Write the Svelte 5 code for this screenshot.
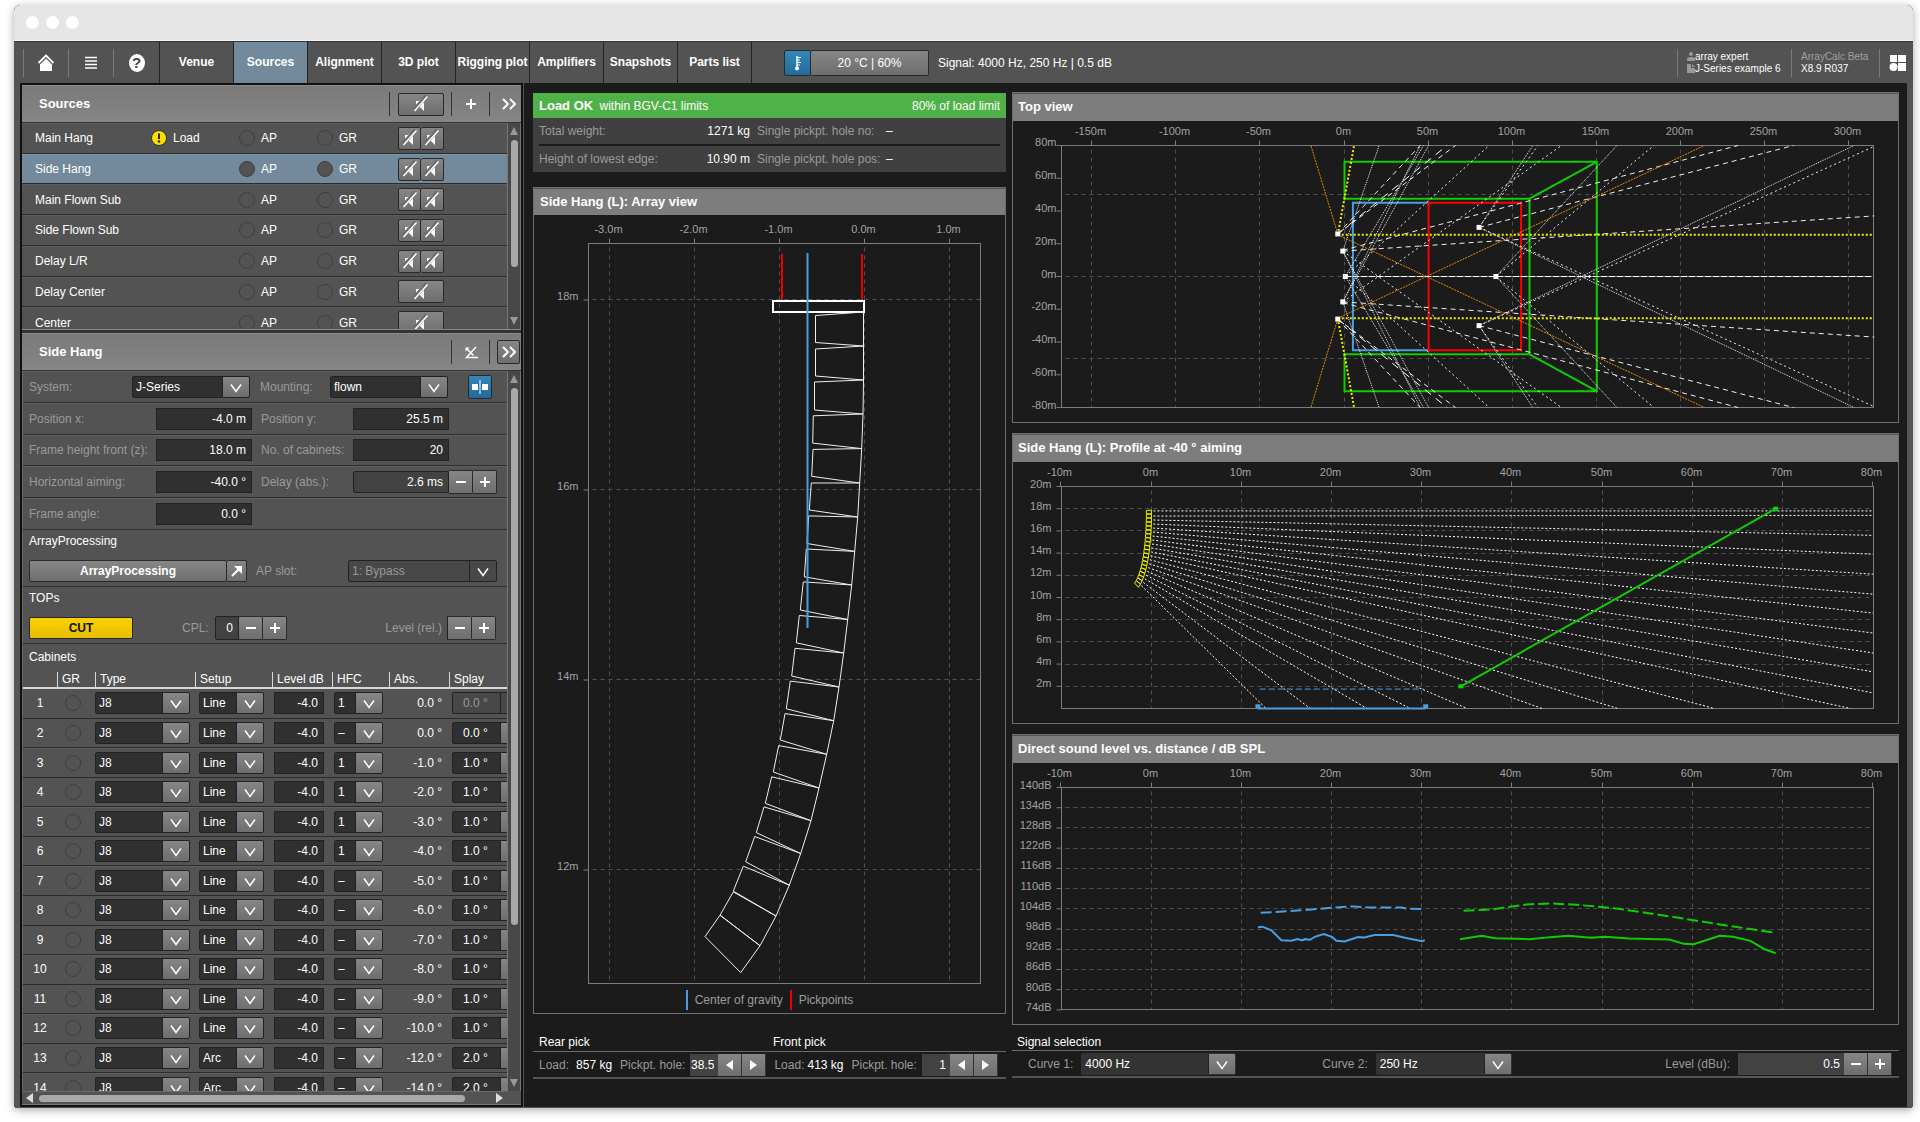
<script lang="ts">
  type Pt = [number, number];

  interface Axes {
    left: number;
    right: number;
    top: number;
    bottom: number;
    gap: number;
    labelY: number;
    drop: number;
    xs: { at: number; label: string }[];
    ys: { at: number; label: string }[];
    rows: number[];
  }

  const tabs = ["Venue", "Sources", "Alignment", "3D plot", "Rigging plot", "Amplifiers", "Snapshots", "Parts list"];

  const sources = [
    { name: "Main Hang", warn: true, pair: true },
    { name: "Side Hang", pair: true },
    { name: "Main Flown Sub", pair: true },
    { name: "Side Flown Sub", pair: true },
    { name: "Delay L/R", pair: true },
    { name: "Delay Center", pair: false },
    { name: "Center", pair: false },
  ];
  let selected = $state("Side Hang");

  const splays = [0, 0, 1, 1, 1, 1, 1, 1, 1, 1, 1, 1, 2, 2];
  const hfcOn = [1, 3, 4, 5, 6];
  let sum = 0;
  const cabinets = splays.map((splay, i) => {
    sum += splay;
    return {
      no: i + 1,
      setup: i < 12 ? "Line" : "Arc",
      hfc: hfcOn.includes(i + 1) ? "1" : "–",
      abs: (sum ? "-" : "") + sum.toFixed(1) + " °",
      splay: splay.toFixed(1) + " °",
    };
  });

  function range(from: number, to: number, step: number) {
    const out: number[] = [];
    for (let v = from; step > 0 ? v <= to : v >= to; v += step) out.push(v);
    return out;
  }

  // array view: top left, bottom left, bottom right corner of every cabinet
  const hang = [
    [281.5, 100.5, 281.5, 127.5, 329.5, 131],
    [281.5, 134, 281.5, 161, 329.5, 165],
    [280.5, 167, 280.5, 195, 329, 199],
    [279.3, 200.8, 278.7, 228.1, 327.7, 233.6],
    [279, 234.4, 277.7, 261.3, 325.7, 268],
    [277.3, 268, 275.3, 295, 323.7, 302],
    [274.7, 300.9, 273, 328.5, 320.7, 336.4],
    [272.3, 334, 270.3, 361.8, 317.7, 370],
    [269.3, 366.9, 266.3, 395, 313.7, 404.5],
    [265.3, 400.5, 262.3, 427.8, 309.7, 438],
    [261, 433.3, 257.7, 461, 305, 472],
    [256.3, 466.1, 252.3, 493.8, 299.7, 505.7],
    [251, 498.6, 246.3, 525, 292.7, 539.3],
    [244.7, 530.6, 239.3, 557, 285, 573],
    [237.7, 561.8, 231.3, 588.3, 277, 605.7],
    [230, 591.9, 222.3, 617.6, 266.7, 638.5],
    [220.7, 621.5, 211.7, 646.8, 255.3, 670.2],
    [209.3, 651.2, 199.3, 676.1, 242, 701],
    [199.3, 676.9, 186, 700.2, 226, 730.7],
    [186, 700.2, 171, 721.6, 206.7, 757.6],
  ];
  const boxes: Pt[][] = hang.map((c, i) => {
    const front: Pt = i ? [hang[i - 1][4], hang[i - 1][5]] : [329.5, 97];
    return [front, [c[0], c[1]], [c[2], c[3]], [c[4], c[5]]];
  });
  const join = (pts: Pt[]) => pts.map((p) => p.join(",")).join(" ");

  const arrayAxes: Axes = {
    left: 54.5, right: 446.5, top: 28.5, bottom: 768.5, gap: 10, labelY: 18, drop: 0,
    xs: [-3, -2, -1, 0, 1].map((v) => ({ at: 330.5 + 85 * v, label: v.toFixed(1) + "m" })),
    ys: [18, 16, 14, 12].map((v) => ({ at: 85 + 95 * (18 - v), label: v + "m" })),
    rows: [18, 16, 14, 12].map((v) => 84.5 + 95 * (18 - v)),
  };

  // top view, in metres
  const tx = (m: number) => 331.5 + 1.682 * m;
  const ty = (m: number) => 155.5 - 1.638 * m;
  const topAxes: Axes = {
    left: 48.5, right: 860.5, top: 24.5, bottom: 286.5, gap: 5, labelY: 14, drop: 1,
    xs: range(-150, 300, 50).map((v) => ({ at: Math.round(tx(v)) - 0.5, label: v + "m" })),
    ys: range(80, -80, -20).map((v) => ({ at: ty(v), label: v + "m" })),
    rows: [50, 0, -50].map(ty),
  };
  const beams: { kind: string; from: Pt; to: Pt }[] = [
    { kind: "dash", from: [-4, 26], to: [45, 80] },
    { kind: "dash bold", from: [-4, 26], to: [61, 80] },
    { kind: "dash", from: [-4, 26], to: [66, 80] },
    { kind: "dot", from: [-1, 15.5], to: [20.6, 80] },
    { kind: "dash", from: [-1, 15.5], to: [315, 37] },
    { kind: "dash", from: [-1, 16], to: [234, 80] },
    { kind: "dot", from: [-1, -15.5], to: [45, 80] },
    { kind: "dot", from: [0.5, 0], to: [47, 80] },
    { kind: "dot", from: [-1, -15.5], to: [50, 80] },
    { kind: "loose", from: [0.5, 0], to: [86, 80] },
    { kind: "loose", from: [-1, -15.5], to: [129, 80] },
    { kind: "dot", from: [80, 30], to: [112, 80] },
    { kind: "loose", from: [80, 30], to: [115, 80] },
    { kind: "dash", from: [80, 30], to: [267, 80] },
    { kind: "loose", from: [80, 30], to: [314, -79] },
    { kind: "dot", from: [80, 30], to: [303, -80] },
    { kind: "dot", from: [90, 0], to: [162, 80] },
    { kind: "loose", from: [90, 0], to: [184, 80] },
    { kind: "orange", from: [-4, 26], to: [-20, 80] },
    { kind: "orange", from: [-4, 25.5], to: [214, -80] },
    { kind: "yellow", from: [-4, 25.5], to: [5.7, 80] },
    { kind: "yellow", from: [-4, 25.5], to: [314, 25.5] },
  ];
  const markers: Pt[] = [[-4, 26], [-1, 15.5], [80, 30], [80, -30], [-1, -15.5], [-4, -26], [0.5, 0], [90, 0]];

  // profile and level plots share the distance axis
  const dx = (m: number) => 138.5 + 9.02 * m;
  const py = (m: number) => 246.5 - 11.1 * m;
  const ly = (db: number) => 24.5 + 3.37 * (140 - db);
  const distances = range(-10, 80, 10).map((v) => ({ at: Math.round(dx(v)) - 0.5, label: v + "m" }));
  const profileAxes: Axes = {
    left: 48.5, right: 860.5, top: 24.5, bottom: 246.5, gap: 10, labelY: 14, drop: 1,
    xs: distances,
    ys: range(20, 2, -2).map((v) => ({ at: py(v), label: v + "m" })),
    rows: range(18, 2, -2).map(py),
  };
  const levelAxes: Axes = {
    left: 48.5, right: 860.5, top: 24.5, bottom: 246.5, gap: 10, labelY: 14, drop: 1,
    xs: distances,
    ys: range(140, 74, -6).map((v) => ({ at: ly(v), label: v + "dB" })),
    rows: range(134, 80, -6).map(ly),
  };

  const rayEnds: Pt[] = [
    [80, 17.8], [80, 17.4], [80, 15.6], [80, 13.9], [80, 12.1], [80, 10.3], [80, 8.6], [80, 6.8], [80, 5], [80, 3.3], [80, 1.4],
    [77.5, 0], [62.4, 0], [51.7, 0], [43.3, 0], [35, 0], [28.7, 0], [23.9, 0], [17.6, 0], [12.7, 0],
  ];
  const toMetres = ([x, y]: Pt): Pt => [(x - 330) / 85, 18 - (y - 85) / 95];
  const profileBoxes = boxes.map((b) => b.map(toMetres).map(([x, y]): Pt => [dx(x), py(y)]));
  const rays = rayEnds.map((to, i) => {
    const a = toMetres(boxes[i][0]);
    const b = toMetres(boxes[i][3]);
    return { x: dx((a[0] + b[0]) / 2) + 2, y: i ? py((a[1] + b[1]) / 2) : py(17.8), to };
  });

  const curves: { kind: string; pts: Pt[] }[] = [
    { kind: "blue dashed", pts: [[12.1, 102.8], [15.8, 103.4], [20, 104.3], [22.3, 104.7], [24.2, 104.4], [27.7, 104.4], [28.5, 104], [30.3, 103.9]] },
    { kind: "blue", pts: [[11.8, 98.5], [12.3, 98.7], [13.3, 97.6], [14.4, 94.7], [15.5, 94.5], [16.2, 95], [16.7, 94.6], [17, 95], [17.6, 94.8], [18.1, 95.7], [19.1, 96.5], [20, 95.7], [20.5, 94.5], [21.4, 94.3], [22.9, 95.6], [23.6, 95.5], [24.7, 96.2], [26.8, 96.2], [28.1, 95.4], [30, 94.4], [30.3, 94.7]] },
    { kind: "green dashed", pts: [[34.6, 103.4], [37.7, 103.8], [40, 104.7], [41.6, 105.3], [44.2, 105.6], [47.1, 105.2], [51.3, 104.2], [55.1, 102.7], [59, 101.1], [64.1, 98.9], [69.2, 96.9]] },
    { kind: "green", pts: [[34.2, 95], [36.6, 96], [38.1, 95.3], [41.9, 95], [44.2, 95.6], [46.2, 96], [48.7, 95.4], [50.3, 95.7], [52.9, 95.2], [57.4, 94.9], [59, 93.6], [60.1, 93.5], [63, 96], [64.5, 95.7], [66.4, 94.5], [68, 92], [69.2, 90.8]] },
  ];
</script>

{#snippet mute()}
  <svg viewBox="0 0 16 18" width="16" height="18" aria-hidden="true">
    <path d="M3 6h3l5-4v14l-5-5H3z" fill="#fff" />
    <path d="M.8 15.200L13.800.8" stroke="#6c6c6c" stroke-width="4" />
    <path d="M1.500 16L14.500 1.500" stroke="#fff" stroke-width="1.600" />
  </svg>
{/snippet}

{#snippet chevrons()}
  <svg viewBox="0 0 14 12" width="14" height="12"><path d="M1 1l5 5-5 5M8 1l5 5-5 5" fill="none" stroke="#fff" stroke-width="2" /></svg>
{/snippet}

{#snippet axes(a: Axes)}
  {#each a.xs as x}
    <text class="tick" x={x.at - 1} y={a.labelY} text-anchor="middle">{x.label}</text>
    <path class="mark" d="M{x.at} {a.top - 5}V{a.top}" />
    {#if x.at > a.left + 2 && x.at < a.right - 4}
      <path class="grid" d="M{x.at} {a.top + 4}V{a.bottom}" />
    {/if}
  {/each}
  {#each a.ys as y}
    <text class="tick" x={a.left - a.gap} y={y.at + a.drop} text-anchor="end">{y.label}</text>
    <path class="mark" d="M{a.left - 5} {y.at}H{a.left}" />
  {/each}
  {#each a.rows as y}
    <path class="grid" d="M{a.left + 4} {Math.floor(y) + 0.5}H{a.right}" />
  {/each}
  <rect class="frame" x={a.left} y={a.top} width={a.right - a.left} height={a.bottom - a.top} />
{/snippet}

{#snippet steps()}
  <button class="btn step" aria-label="Decrease"><i class="minus"></i></button><button class="btn step" aria-label="Increase"><i class="minus plus"></i></button>
{/snippet}

<div class="window">
  <div class="titlebar"><i></i><i></i><i></i></div>

  <header class="toolbar">
    <div class="icons">
      <button aria-label="Home">
        <svg viewBox="0 0 18 20" width="18" height="20"><path d="M1.500 10L9 2.500l7.500 7.500" fill="none" stroke="#fff" stroke-width="1.800" /><path d="M3 11.500l6-6 6 6V18H3z" fill="#fff" /></svg>
      </button>
      <button aria-label="Menu">
        <svg viewBox="0 0 14 14" width="14" height="14"><path d="M1 1.500h12M1 5h12M1 8.500h12M1 12h12" stroke="#fff" stroke-width="1.500" /></svg>
      </button>
      <button aria-label="Help"><span class="help">?</span></button>
    </div>
    <nav>
      {#each tabs as tab}
        <button class:active={tab === "Sources"}>{tab}</button>
      {/each}
    </nav>
    <div class="climate">
      <button class="btn blue" aria-label="Environment">
        <svg viewBox="0 0 12 18" width="12" height="18"><path d="M5 2v12" stroke="#fff" stroke-width="1.500" /><circle cx="5" cy="14.500" r="2" fill="#fff" /><path d="M5 3.500h4M5 6h3M5 8.500h4M5 11h3" stroke="#fff" /></svg>
      </button><button class="btn temp">20 °C | 60%</button>
    </div>
    <span class="signal">Signal: 4000 Hz, 250 Hz | 0.5 dB</span>
    <div class="info project">
      <div><svg viewBox="0 0 8 9" width="8" height="9"><circle cx="4" cy="2" r="2" fill="#999" /><path d="M0 9V7q0-2 4-2t4 2v2z" fill="#999" /></svg>array expert</div>
      <div><svg viewBox="0 0 8 9" width="8" height="9"><path d="M0 0h4v4h4v5H0z" fill="#999" /><path d="M5 0l3 3H5z" fill="#999" /></svg>J-Series example 6</div>
    </div>
    <div class="info version"><div class="dim">ArrayCalc Beta</div><div>X8.9 R037</div></div>
    <div class="info apps">
      <svg viewBox="0 0 18 18" width="18" height="18" fill="#fff"><path d="M1 1h7v7H1zM9 1h8v7H9zM9 9h8v8H9z" /><circle cx="4.500" cy="13" r="4" /></svg>
    </div>
  </header>

  <main>
    <aside>
      <section class="sources">
        <div class="bar">
          <h2>Sources</h2>
          <span class="cell mutes"><button class="btn single" aria-label="Mute all">{@render mute()}</button></span>
          <button class="cell" aria-label="Add"><i class="minus plus"></i></button>
          <button class="cell last" aria-label="Expand">{@render chevrons()}</button>
        </div>
        <div class="listwrap">
          <div class="list">
            <div class="items">
              {#each sources as s}
                <div class="item" class:sel={selected === s.name}>
                  <button class="name" onclick={() => (selected = s.name)}>{s.name}</button>
                  <span class="warn">
                    {#if s.warn}
                      <svg viewBox="0 0 16 16" width="16" height="16"><circle cx="8" cy="8" r="7.500" fill="#fd0" stroke="#333" /><path d="M8 3.500v5.500" stroke="#222" stroke-width="2" /><circle cx="8" cy="11.500" r="1.200" fill="#222" /></svg>
                      Load
                    {/if}
                  </span>
                  <span class="led"><i></i>AP</span>
                  <span class="led"><i></i>GR</span>
                  <span class="mutes">
                    {#if s.pair}
                      <button class="btn" aria-label="Mute left">{@render mute()}</button><button class="btn" aria-label="Mute right">{@render mute()}</button>
                    {:else}
                      <button class="btn single" aria-label="Mute">{@render mute()}</button>
                    {/if}
                  </span>
                </div>
              {/each}
            </div>
          </div>
          <div class="vscroll short"><b class="up"></b><i></i><b class="down"></b></div>
        </div>
      </section>

      <section class="detail">
        <div class="bar">
          <h2>Side Hang</h2>
          <button class="cell" aria-label="Aim"><svg viewBox="0 0 14 13" width="14" height="13" fill="none" stroke="#fff" stroke-width="1.500"><path d="M2.500 2.500l7 7M12 1L2.500 11.500H14" /><path d="M1.500 5.500v-4h4z" fill="#fff" stroke="none" /></svg></button>
          <span class="cell last"><button class="btn more" aria-label="Expand">{@render chevrons()}</button></span>
        </div>
        <div class="scroller">
          <div class="view">
            <div class="form">
              <div class="line">
                <label class="wide" for="system">System:</label>
                <select id="system" class="sel118"><option>J-Series</option></select>
                <label class="near" for="mount">Mounting:</label>
                <select id="mount" class="sel118"><option>flown</option></select>
                <button class="btn blue pairbtn" aria-label="Symmetric pair"><svg viewBox="0 0 16 14" width="16" height="14" fill="#fff"><path d="M0 4h6v6H0zM10 4h6v6h-6zM7.500 0h1v14h-1z" /></svg></button>
              </div>
              <div class="line">
                <label class="long" for="px">Position x:</label><input id="px" value="-4.0 m" />
                <label class="mid" for="py">Position y:</label><input id="py" value="25.5 m" />
              </div>
              <div class="line">
                <label class="long" for="fh">Frame height front (z):</label><input id="fh" value="18.0 m" />
                <label class="mid" for="nc">No. of cabinets:</label><input id="nc" value="20" />
              </div>
              <div class="line">
                <label class="long" for="ha">Horizontal aiming:</label><input id="ha" value="-40.0 °" />
                <label class="mid" for="de">Delay (abs.):</label><input id="de" class="soft" value="2.6 ms" />{@render steps()}
              </div>
              <div class="line">
                <label class="long" for="fa">Frame angle:</label><input id="fa" value="0.0 °" />
              </div>
            </div>
            <div class="block">
              <h3>ArrayProcessing</h3>
              <div class="controls">
                <button class="btn apbtn">ArrayProcessing</button><button class="btn apgo" aria-label="Open"><svg viewBox="0 0 12 12" width="12" height="12"><path d="M1 11l7-7" stroke="#fff" stroke-width="2" /><path d="M3 1h8v8z" fill="#fff" /></svg></button>
                <label class="slotlabel" for="slot">AP slot:</label>
                <select id="slot" class="slot" disabled><option>1: Bypass</option></select>
              </div>
            </div>
            <div class="block">
              <h3>TOPs</h3>
              <div class="controls">
                <button class="btn cut">CUT</button>
                <label class="cpl" for="cpl">CPL:</label>
                <input id="cpl" class="soft tiny" value="0" />{@render steps()}
                <span class="rel">Level (rel.)</span>{@render steps()}
              </div>
            </div>
            <h3 class="cabs">Cabinets</h3>
            <table>
              <colgroup>
                <col class="c34" /><col class="c38" /><col class="c100" /><col class="c77" /><col class="c60" /><col class="c57" /><col class="c60" /><col class="c59" />
              </colgroup>
              <thead>
                <tr><th></th><th><span>GR</span></th><th><span>Type</span></th><th><span>Setup</span></th><th><span>Level dB</span></th><th><span>HFC</span></th><th><span>Abs.</span></th><th><span>Splay</span></th></tr>
              </thead>
              <tbody>
                {#each cabinets as c}
                  <tr>
                    <td class="no">{c.no}</td>
                    <td><i class="dot"></i></td>
                    <td><select class="type" aria-label="Type"><option>J8</option></select></td>
                    <td><select class="setup" aria-label="Setup"><option>{c.setup}</option></select></td>
                    <td><input class="lvl" aria-label="Level" value="-4.0" /></td>
                    <td><select class="hfc" aria-label="HFC"><option>{c.hfc}</option></select></td>
                    <td class="abs">{c.abs}</td>
                    <td><select class="splay" aria-label="Splay" disabled={c.no === 1}><option>{c.splay}</option></select></td>
                  </tr>
                {/each}
              </tbody>
            </table>
          </div>
          <div class="vscroll tall"><b class="up"></b><i></i><b class="down"></b></div>
          <div class="hscroll"><b class="prev"></b><i></i><b class="next"></b></div>
        </div>
      </section>
    </aside>

    <div class="column array">
      <div class="load">
        <div class="ok"><span><strong>Load OK</strong> within BGV-C1 limits</span><span>80% of load limit</span></div>
        <div class="facts">
          <div><span>Total weight:</span><b>1271 kg</b><span>Single pickpt. hole no:</span><b class="none">–</b></div>
          <div><span>Height of lowest edge:</span><b>10.90 m</b><span>Single pickpt. hole pos:</span><b class="none">–</b></div>
        </div>
      </div>
      <section class="panel">
        <h2>Side Hang (L): Array view</h2>
        <svg class="plot" viewBox="0 0 471 773">
          {@render axes(arrayAxes)}
          <path d="M248 39V86M328 39V87" stroke="#e00" stroke-width="2" />
          <rect x="239" y="86" width="91" height="11" fill="none" stroke="#fff" stroke-width="2" />
          {#each boxes as b}
            <polygon points={join(b)} fill="none" stroke="#eee" />
          {/each}
          <path d="M273.500 38V413" stroke="#4a9fe4" stroke-width="2" />
        </svg>
        <div class="legend"><span>Center of gravity</span><span class="pick">Pickpoints</span></div>
      </section>
      <div class="foot">
        <div class="heads"><h3>Rear pick</h3><h3>Front pick</h3></div>
        <div class="strip picks">
          <div><span>Load:</span><b>857 kg</b><label for="rear">Pickpt. hole:</label><input id="rear" class="hole" value="38.5" /><button class="btn step" aria-label="Previous hole"><i class="prev"></i></button><button class="btn step" aria-label="Next hole"><i class="next"></i></button></div>
          <div><span>Load:</span><b class="tight">413 kg</b><label for="front">Pickpt. hole:</label><input id="front" class="hole" value="1" /><button class="btn step" aria-label="Previous hole"><i class="prev"></i></button><button class="btn step" aria-label="Next hole"><i class="next"></i></button></div>
        </div>
      </div>
    </div>

    <div class="column plots">
      <section class="panel">
        <h2>Top view</h2>
        <svg class="plot" viewBox="0 0 885 301">
          {@render axes(topAxes)}
          <path class="area blue" d="M{tx(50)} {ty(45)}H{tx(5)}V{ty(-45)}H{tx(50)}" />
          <path class="area red" d="M{tx(50)} {ty(45)}H{tx(105)}V{ty(-45)}H{tx(50)}z" />
          <path class="area green" d="M{tx(0)} {ty(47.5)}V{ty(70)}H{tx(150)}V{ty(-70)}H{tx(0)}V{ty(-47.5)}H{tx(110)}V{ty(47.5)}zM{tx(110)} {ty(47.5)}L{tx(150)} {ty(70)}M{tx(110)} {ty(-47.5)}L{tx(150)} {ty(-70)}" />
          {#each beams as b}
            <path class="beam {b.kind}" d="M{tx(b.from[0])} {ty(b.from[1])}L{tx(b.to[0])} {ty(b.to[1])}M{tx(b.from[0])} {ty(-b.from[1])}L{tx(b.to[0])} {ty(-b.to[1])}" />
          {/each}
          <path class="beam center" d="M{tx(0)} {ty(0)}H{tx(314)}" />
          {#each markers as m}
            <rect x={tx(m[0]) - 2.5} y={ty(m[1]) - 2.5} width="5" height="5" fill="#fff" />
          {/each}
        </svg>
      </section>

      <section class="panel">
        <h2>Side Hang (L): Profile at -40 ° aiming</h2>
        <svg class="plot" viewBox="0 0 885 261">
          {@render axes(profileAxes)}
          {#each rays as r}
            <path class="ray" d="M{r.x} {r.y}L{dx(r.to[0])} {py(r.to[1])}" />
          {/each}
          {#each profileBoxes as b}
            <polygon points={join(b)} fill="none" stroke="#ee0" />
          {/each}
          <path class="area green" d="M{dx(34.3)} {py(2)}L{dx(69.2)} {py(18)}" />
          <rect x={dx(34.3) - 2.5} y={py(2) - 2} width="5" height="4" fill="#0d0" />
          <rect x={dx(69.2) - 2.5} y={py(18) - 2} width="5" height="4" fill="#0d0" />
          <path class="area blue" d="M{dx(11.8)} {py(0)}H{dx(30.4)}" />
          <path class="ears" d="M{dx(12)} {py(1.75)}H{dx(30.2)}" />
          <rect x={dx(11.8) - 2.5} y={py(0.2) - 2} width="5" height="4" fill="#4a9fe4" />
          <rect x={dx(30.4) - 2.5} y={py(0.2) - 2} width="5" height="4" fill="#4a9fe4" />
        </svg>
      </section>

      <section class="panel">
        <h2>Direct sound level vs. distance / dB SPL</h2>
        <svg class="plot" viewBox="0 0 885 261">
          {@render axes(levelAxes)}
          {#each curves as c}
            <polyline class="area {c.kind}" points={join(c.pts.map(([x, y]): Pt => [dx(x), ly(y)]))} />
          {/each}
        </svg>
      </section>

      <div class="foot">
        <div class="heads"><h3>Signal selection</h3></div>
        <div class="strip signals">
          <span><label for="c1">Curve 1:</label><select id="c1" class="flat c1"><option>4000 Hz</option></select></span>
          <span><label for="c2">Curve 2:</label><select id="c2" class="flat c2"><option>250 Hz</option></select></span>
          <span><label for="dbu">Level (dBu):</label><input id="dbu" class="hole dbu" value="0.5" />{@render steps()}</span>
        </div>
      </div>
    </div>
  </main>
</div>

<style>
  :global(body) {
    margin: 0;
    background: #fff;
  }
  .window {
    margin: 5px 7px 14px 14px;
    border-radius: 6px 6px 4px 4px;
    overflow: hidden;
    background: #1b1b1b;
    box-shadow: 0 2px 8px rgba(0, 0, 0, 0.35);
    font: 12px/14px "Liberation Sans", Arial, sans-serif;
    color: #fff;
  }
  button, input, select {
    font: inherit;
    color: inherit;
    margin: 0;
    padding: 0;
    border: 0;
    background: none;
    box-sizing: border-box;
    border-radius: 0;
  }
  h2, h3 {
    margin: 0;
    font-size: 13px;
    line-height: 16px;
  }
  h3 {
    font-size: 12px;
    font-weight: 400;
    line-height: 14px;
  }
  label, .rel {
    color: #9a9a9a;
    white-space: nowrap;
    box-sizing: border-box;
  }
  .titlebar {
    height: 36px;
    padding-left: 12px;
    display: flex;
    align-items: center;
    gap: 7px;
    background: #e5e5e5;
    border-bottom: 1px solid #f4f4f4;
    box-sizing: border-box;
  }
  .titlebar i {
    width: 13px;
    height: 13px;
    border-radius: 50%;
    background: #fff;
  }

  .toolbar {
    height: 42px;
    box-sizing: border-box;
    display: flex;
    align-items: center;
    background: #535353;
    border-top: 1px solid #333;
  }
  .icons {
    display: flex;
    padding-left: 9px;
  }
  .icons button {
    width: 45px;
    height: 28px;
    border-left: 1px solid #7a7a7a;
    display: flex;
    align-items: center;
    justify-content: center;
  }
  .icons button:last-child {
    width: 46px;
  }
  .help {
    width: 16px;
    height: 18px;
    border-radius: 50%;
    background: #fff;
    color: #444;
    font: bold 15px/18px "Liberation Sans", Arial, sans-serif;
  }
  nav {
    display: flex;
    align-self: stretch;
  }
  nav button {
    width: 74px;
    padding-bottom: 1px;
    border-left: 1px solid #222;
    font-weight: 700;
    white-space: nowrap;
    display: flex;
    align-items: center;
    justify-content: center;
  }
  nav button:last-child {
    width: 75px;
    border-right: 1px solid #222;
  }
  nav .active {
    background: #728a9b;
  }
  .btn {
    border: 1px solid #2a2a2a;
    background: linear-gradient(#868686, #6e6e6e);
    display: inline-flex;
    align-items: center;
    justify-content: center;
    border-radius: 2px;
  }
  .btn.blue {
    background: linear-gradient(#3288bd, #226a98);
  }
  .btn + .btn {
    border-left: 0;
  }
  .climate {
    display: flex;
    margin: 0 9px 0 32px;
  }
  .climate .btn {
    height: 26px;
    width: 27px;
  }
  .climate .temp {
    width: 118px;
  }
  .signal {
    flex: 1;
  }
  .info {
    height: 28px;
    padding-left: 9px;
    border-left: 1px solid #7a7a7a;
    font-size: 10px;
    line-height: 12px;
    display: flex;
    flex-direction: column;
    justify-content: center;
    white-space: nowrap;
  }
  .info div {
    display: flex;
    align-items: center;
  }
  .project {
    width: 104px;
  }
  .version {
    width: 78px;
  }
  .apps {
    width: 24px;
  }
  .dim {
    color: #a0a0a0;
  }

  main {
    display: grid;
    grid-template-columns: 511px minmax(0, 481fr) minmax(0, 895fr);
    border: solid #555;
    border-width: 0 6px 1px 6px;
    background: #1b1b1b;
  }
  aside {
    padding: 2px;
    background: #111;
    margin-right: 7px;
    border-right: 1px solid #555;
  }
  .bar {
    display: flex;
    align-items: center;
    height: 38px;
    box-sizing: border-box;
    background: linear-gradient(#7a7a7a, #858585);
    border-top: 1px solid #8c8c8c;
    border-bottom: 1px solid #333;
  }
  .bar h2 {
    flex: 1;
    padding-left: 17px;
  }
  .cell {
    height: 24px;
    width: 38px;
    border-left: 1px solid #333;
    display: flex;
    align-items: center;
    justify-content: center;
    box-sizing: border-box;
  }
  .cell.mutes {
    width: 62px;
  }
  .cell.last {
    width: 32px;
    padding-left: 6px;
  }
  .more {
    width: 23px;
    height: 24px;
  }
  .mutes .btn {
    width: 23px;
    height: 23px;
  }
  .mutes .single {
    width: 46px;
  }
  .sources {
    border-bottom: 3px solid #333;
  }
  .listwrap {
    display: flex;
    height: 206px;
    border-bottom: 1px solid #888;
  }
  .list {
    flex: 1;
    overflow: hidden;
    background: #535353;
  }
  .items {
    height: 215px;
    display: grid;
    grid-template-rows: repeat(7, 1fr);
  }
  .item {
    display: grid;
    grid-template-columns: 129px 88px 78px 81px 1fr;
    align-items: center;
    border-bottom: 1px solid #2b2b2b;
    border-top: 1px solid #5d5d5d;
    box-sizing: border-box;
  }
  .item.sel {
    background: #728a9b;
    border-top-color: #8097a6;
  }
  .item .name {
    text-align: left;
    padding-left: 13px;
  }
  .item .mutes {
    display: flex;
  }
  .warn, .led {
    display: flex;
    align-items: center;
    gap: 6px;
  }
  .led i, .dot {
    width: 16px;
    height: 16px;
    box-sizing: border-box;
    border: 1px solid #3f3f3f;
    border-radius: 50%;
  }
  .sel .led i {
    background: #535353;
  }
  .vscroll {
    width: 14px;
    box-sizing: border-box;
    display: flex;
    flex-direction: column;
    align-items: center;
    padding: 4px 0;
    gap: 5px;
    background: #484848;
    border-left: 1px solid #777;
    border-right: 1px solid #777;
  }
  .vscroll i {
    width: 7px;
    border-radius: 4px;
    background: #a8a8a8;
  }
  .vscroll b {
    border: 4px solid transparent;
  }
  .vscroll .up {
    border-top: 0;
    border-bottom: 8px solid #999;
  }
  .vscroll .down {
    border-bottom: 0;
    border-top: 8px solid #999;
    margin-top: auto;
  }
  .short i {
    height: 127px;
  }
  .tall i {
    height: 537px;
  }
  .scroller {
    display: grid;
    grid-template-columns: minmax(0, 1fr) 14px;
    grid-template-rows: 720px 13px;
    background: #535353;
    border-bottom: 1px solid #777;
  }
  .view {
    overflow: hidden;
    border-left: 1px solid #666;
  }
  .hscroll {
    display: flex;
    align-items: center;
    gap: 6px;
    padding: 0 4px;
    background: #535353;
    border-top: 1px solid #6a6a6a;
  }
  .hscroll i {
    width: 426px;
    height: 7px;
    border-radius: 4px;
    background: #a8a8a8;
  }
  .hscroll .next {
    margin-left: auto;
  }
  .prev, .next {
    border: 5px solid transparent;
  }
  .prev {
    border-left: 0;
    border-right: 7px solid #ddd;
  }
  .next {
    border-right: 0;
    border-left: 7px solid #ddd;
  }

  .form {
    height: 159px;
    display: grid;
    grid-template-rows: repeat(5, 1fr);
  }
  .line {
    display: flex;
    align-items: center;
    padding-left: 6px;
    border-bottom: 1px solid #2e2e2e;
    border-top: 1px solid #5f5f5f;
    box-sizing: border-box;
  }
  .long {
    width: 127px;
  }
  .wide {
    width: 103px;
  }
  .near {
    width: 80px;
    padding-left: 10px;
  }
  .mid {
    width: 101px;
    padding-left: 9px;
  }
  input {
    width: 96px;
    height: 22px;
    padding-right: 5px;
    text-align: right;
    background: #303030;
    border: 1px solid #222;
  }
  input.soft {
    background: #424242;
    border-radius: 2px 0 0 2px;
  }
  select {
    appearance: none;
    height: 22px;
    padding-left: 3px;
    border: 1px solid #222;
    border-radius: 2px;
    opacity: 1;
    background:
      url("data:image/svg+xml,%3Csvg xmlns='http://www.w3.org/2000/svg' width='27' height='20'%3E%3Cpath d='M.5 0v20' stroke='%23222'/%3E%3Cpath d='M9 7.500l5 7 5-7' fill='none' stroke='white' stroke-width='1.500'/%3E%3C/svg%3E") right center no-repeat,
      linear-gradient(#868686, #6e6e6e) right center / 27px 100% no-repeat,
      #303030;
  }
  select:disabled {
    color: #999;
    background:
      url("data:image/svg+xml,%3Csvg xmlns='http://www.w3.org/2000/svg' width='27' height='20'%3E%3Cpath d='M.5 0v20' stroke='%23222'/%3E%3Cpath d='M9 7.500l5 7 5-7' fill='none' stroke='white' stroke-width='1.500'/%3E%3C/svg%3E") right center no-repeat,
      #484848;
  }
  .sel118 {
    width: 118px;
  }
  .pairbtn {
    width: 24px;
    height: 24px;
    margin-left: 20px;
  }
  .step {
    width: 24px;
    height: 24px;
    border-left: 0;
    border-radius: 0 2px 2px 0;
  }
  .minus {
    width: 10px;
    height: 2px;
    background: #fff;
  }
  .plus {
    height: 10px;
    background:
      linear-gradient(#fff, #fff) center / 10px 2px no-repeat,
      linear-gradient(#fff, #fff) center / 2px 10px no-repeat;
  }
  .block {
    box-sizing: border-box;
    padding: 4px 0 0 6px;
    border-bottom: 1px solid #2e2e2e;
    height: 57px;
  }
  .controls {
    display: flex;
    align-items: center;
    height: 26px;
    margin-top: 10px;
  }
  .apbtn {
    width: 198px;
    height: 22px;
    font-weight: 700;
  }
  .apgo {
    width: 20px;
    height: 22px;
  }
  .slotlabel {
    width: 101px;
    padding-left: 9px;
  }
  .slot {
    width: 149px;
  }
  .cut {
    width: 104px;
    height: 22px;
    background: linear-gradient(#fbd000, #e6bd00);
    color: #111;
    font-weight: 700;
  }
  .cpl {
    width: 33px;
    margin-left: 49px;
  }
  .tiny {
    width: 24px;
    height: 24px;
  }
  .rel {
    margin-left: auto;
    padding-right: 5px;
    border-right: 1px solid #222;
    line-height: 24px;
  }
  .rel ~ :last-child {
    margin-right: 11px;
  }
  .cabs {
    padding: 6px 0 0 6px;
    height: 21px;
    box-sizing: border-box;
  }

  table {
    table-layout: fixed;
    width: 485px;
    height: 438px;
    border-collapse: collapse;
  }
  .c34 { width: 34px; }
  .c38 { width: 38px; }
  .c100 { width: 100px; }
  .c77 { width: 77px; }
  .c60 { width: 60px; }
  .c57 { width: 57px; }
  .c59 { width: 59px; }
  th, td {
    padding: 0;
    text-align: left;
    font-weight: 400;
  }
  th {
    height: 22px;
    border-bottom: 2px solid #d8d8d8;
    vertical-align: bottom;
  }
  th span {
    display: block;
    border-left: 1px solid #d8d8d8;
    padding-left: 4px;
    white-space: nowrap;
    line-height: 15px;
  }
  tbody tr {
    border-bottom: 1px solid #2b2b2b;
    box-shadow: inset 0 1px #5f5f5f;
  }
  td select, td input, td i {
    display: block;
  }
  .no {
    text-align: center;
  }
  .dot {
    margin-left: 8px;
  }
  .type { width: 95px; }
  .setup {
    width: 65px;
    margin-left: 4px;
  }
  .lvl {
    width: 50px;
    margin-left: 2px;
  }
  .hfc {
    width: 49px;
    margin-left: 2px;
  }
  .abs {
    text-align: right;
    padding-right: 7px;
  }
  .splay {
    width: 76px;
    margin-left: 3px;
    padding-left: 10px;
  }

  .column {
    padding-top: 10px;
    min-width: 0;
  }
  .array {
    padding-left: 2px;
    padding-right: 6px;
  }
  .plots {
    padding-top: 9px;
    padding-right: 8px;
  }
  .load {
    background: #404040;
    height: 79px;
    margin-bottom: 15px;
  }
  .ok {
    display: flex;
    justify-content: space-between;
    align-items: center;
    height: 25px;
    padding: 0 6px;
    background: #4fb248;
  }
  .ok strong {
    font-size: 13px;
    margin-right: 3px;
  }
  .facts {
    padding: 0 6px;
  }
  .facts div {
    display: grid;
    grid-template-columns: 138px 80px 129px 1fr;
    height: 26px;
    align-items: center;
  }
  .facts div + div {
    border-top: 2px solid #1b1b1b;
  }
  .facts span {
    color: #9a9a9a;
    white-space: nowrap;
  }
  .facts b {
    font-weight: 400;
    text-align: right;
    padding-right: 7px;
  }
  .facts .none {
    text-align: left;
  }
  .panel {
    border: 1px solid #6e6e6e;
    margin-bottom: 10px;
  }
  .panel h2 {
    height: 27px;
    line-height: 26px;
    box-sizing: border-box;
    padding-left: 6px;
    background: #7d7d7d;
    border-top: 1px solid #555;
  }
  .plots .panel h2 {
    height: 28px;
    padding-left: 5px;
  }
  .plot {
    display: block;
    width: 100%;
    height: auto;
  }
  .tick {
    font-size: 11px;
    fill: #a2a2a2;
  }
  .mark, .frame {
    fill: none;
    stroke: #7c7c7c;
  }
  .grid {
    stroke: #505050;
    stroke-dasharray: 4 4;
  }
  .beam {
    fill: none;
    stroke: #eee;
  }
  .dash { stroke-dasharray: 5 4; }
  .bold { stroke: #fff; stroke-dasharray: 8 6; }
  .dot:is(path) { stroke-dasharray: 1 1; }
  .loose { stroke-dasharray: 2 3; }
  .orange { stroke: #e88a00; stroke-dasharray: 2 1; }
  .yellow { stroke: #ee0; stroke-width: 2; stroke-dasharray: 2 2; }
  .center { stroke: #fff; stroke-dasharray: 7 1; }
  .ray {
    stroke: #fff;
    stroke-dasharray: 2 2;
  }
  .ears {
    stroke: #4a9fe4;
    stroke-dasharray: 6 3;
  }
  .area {
    fill: none;
    stroke-width: 2;
  }
  .area.blue { stroke: #4a9fe4; }
  .area.red { stroke: #f00; }
  .area.green { stroke: #1c0; }
  .area.dashed { stroke-dasharray: 11 4; }

  .legend {
    display: flex;
    justify-content: center;
    gap: 7px;
    height: 25px;
    color: #9c9c9c;
  }
  .legend span {
    height: 20px;
    line-height: 20px;
    margin-top: 2px;
    padding-left: 7px;
    border-left: 2px solid #4a9fe4;
  }
  .legend .pick {
    border-color: #e00;
  }
  .foot {
    margin-bottom: 28px;
  }
  .heads {
    display: grid;
    grid-template-columns: 234px 1fr;
    padding: 11px 6px 2px;
  }
  .plots .heads {
    padding: 0 5px 1px;
  }
  .strip {
    border-top: 1px solid #6a6a6a;
    border-bottom: 2px solid #555;
    height: 25px;
    display: flex;
    align-items: center;
  }
  .picks {
    padding-left: 6px;
    gap: 8px;
    color: #9a9a9a;
  }
  .picks div {
    display: flex;
    align-items: center;
  }
  .picks b {
    font-weight: 400;
    color: #fff;
    margin: 0 8px 0 7px;
    white-space: nowrap;
  }
  .picks .tight {
    margin-left: 3px;
  }
  .picks label {
    margin-right: 5px;
  }
  .hole {
    width: 28px;
    height: 22px;
    background: #424242;
    border: 0;
    padding-right: 4px;
    color: #fff;
  }
  .strip .btn {
    height: 22px;
    border-color: #333;
    border-width: 0 1px 0 0;
    border-radius: 0;
  }
  .picks .prev {
    border-right-color: #fff;
  }
  .picks .next {
    border-left-color: #fff;
  }
  .signals {
    padding: 0 7px 0 16px;
  }
  .signals span {
    display: flex;
    align-items: center;
  }
  .signals span:nth-child(2) {
    margin-left: 86px;
  }
  .signals span:last-child {
    margin-left: auto;
  }
  .signals label {
    margin-right: 8px;
  }
  .flat {
    background-color: #333;
    border-color: #333;
  }
  .c1 { width: 155px; }
  .c2 { width: 136px; }
  .dbu { width: 106px; }
</style>
